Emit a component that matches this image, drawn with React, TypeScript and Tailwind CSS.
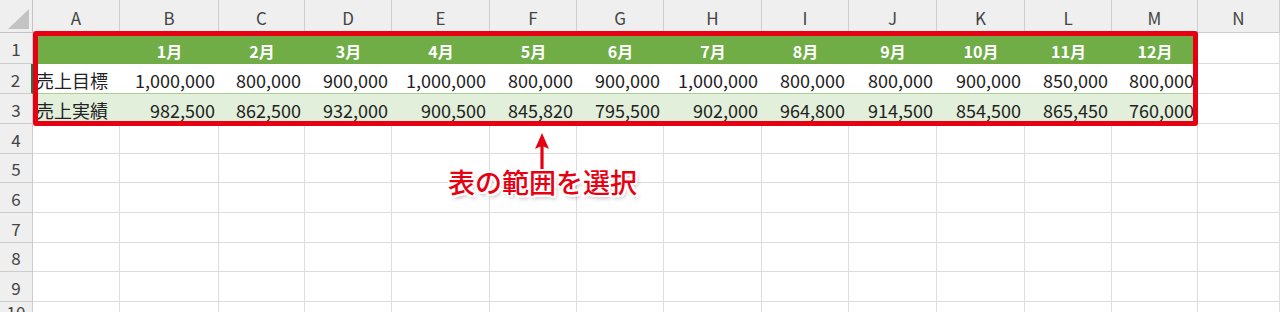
import React from 'react';

const LETTERS = ['A', 'B', 'C', 'D', 'E', 'F', 'G', 'H', 'I', 'J', 'K', 'L', 'M', 'N'];
const MONTHS = ['1月', '2月', '3月', '4月', '5月', '6月', '7月', '8月', '9月', '10月', '11月', '12月'];
const TARGET = ['1,000,000', '800,000', '900,000', '1,000,000', '800,000', '900,000', '1,000,000', '800,000', '800,000', '900,000', '850,000', '800,000'];
const ACTUAL = ['982,500', '862,500', '932,000', '900,500', '845,820', '795,500', '902,000', '964,800', '914,500', '854,500', '865,450', '760,000'];

const headCell = 'bg-[#efefef] border-r border-b border-[#cdcdcd] text-[#444] text-[17px] flex items-center justify-center';
const gridCell = 'bg-white border-r border-b border-[#dcdcdc]';

const RowHead: React.FC<{ n: number; selected?: boolean }> = ({ n, selected }) => (
  <div
    className={`${headCell} pt-[1px] ${selected ? 'bg-[#d6d6d6] border-r-2 border-r-[#217346]' : ''}`}
  >
    {n}
  </div>
);

const App: React.FC = () => {
  return (
    <div className="relative w-[1280px] h-[312px] overflow-hidden bg-white font-['Noto_Sans_CJK_JP',sans-serif] leading-none">
      <div className="grid grid-cols-[33px_87px_99px_86px_87px_98px_87px_87px_98px_87px_88px_88px_87px_86px_1fr] grid-rows-[33px_31px_30px_30px_30px_29px_30px_30px_29px_30px]">
        {/* column headers */}
        <div className="relative bg-[#efefef] border-r border-b border-[#c4c4c4]">
          <svg className="absolute left-0 top-0" width="33" height="33" viewBox="0 0 33 33">
            <polygon points="8,29 29,29 29,9" fill="#c3c3c3" />
          </svg>
        </div>
        {LETTERS.map((l) => (
          <div key={l} className={`${headCell} pt-[3px]`}>
            {l}
          </div>
        ))}

        {/* row 1: months */}
        <RowHead n={1} />
        <div className="bg-[#70ad47]" />
        {MONTHS.map((m) => (
          <div key={m} className="bg-[#70ad47] text-white font-bold text-[16px] flex items-center justify-center pt-[4px]">
            {m}
          </div>
        ))}
        <div className={gridCell} />

        {/* row 2: targets */}
        <RowHead n={2} selected />
        <div className="bg-white border-b border-[#a9d08e] text-[#222] text-[18px] flex items-center pl-[3px] pt-[2px]">
          売上目標
        </div>
        {TARGET.map((v, i) => (
          <div key={i} className="bg-white border-b border-[#a9d08e] text-[#222] text-[18px] flex items-center justify-end pr-[4px] pt-[2px]">
            {v}
          </div>
        ))}
        <div className={gridCell} />

        {/* row 3: actuals */}
        <RowHead n={3} />
        <div className="bg-[#e2efda] text-[#222] text-[18px] flex items-center pl-[3px] pt-[2px]">
          売上実績
        </div>
        {ACTUAL.map((v, i) => (
          <div key={i} className="bg-[#e2efda] text-[#222] text-[18px] flex items-center justify-end pr-[4px] pt-[2px]">
            {v}
          </div>
        ))}
        <div className={gridCell} />

        {/* empty rows */}
        {[4, 5, 6, 7, 8, 9, 10].map((n) => (
          <React.Fragment key={n}>
            <RowHead n={n} />
            {LETTERS.map((l) => (
              <div key={l} className={gridCell} />
            ))}
          </React.Fragment>
        ))}
      </div>

      {/* selection outline */}
      <div className="absolute left-[33px] top-[31px] w-[1165px] h-[95px] border-[5px] border-[#e60012] rounded-[3px]" />

      {/* arrow */}
      <svg className="absolute left-[532px] top-[130px]" width="20" height="46" viewBox="0 0 20 46">
        <path d="M10 3 L17 19 L11.6 16.5 L11.6 45 L8.4 45 L8.4 16.5 L3 19 Z" fill="#e60012" />
      </svg>

      {/* annotation */}
      <div className="absolute left-[448px] top-[168px] text-[27px] font-medium text-[#e60012] [text-shadow:2px_0_0_#fff,-2px_0_0_#fff,0_2px_0_#fff,0_-2px_0_#fff,2px_2px_0_#fff,-2px_-2px_0_#fff,2px_-2px_0_#fff,-2px_2px_0_#fff,2px_3px_4px_rgba(0,0,0,0.35)]">
        表の範囲を選択
      </div>
    </div>
  );
};

export default App;
